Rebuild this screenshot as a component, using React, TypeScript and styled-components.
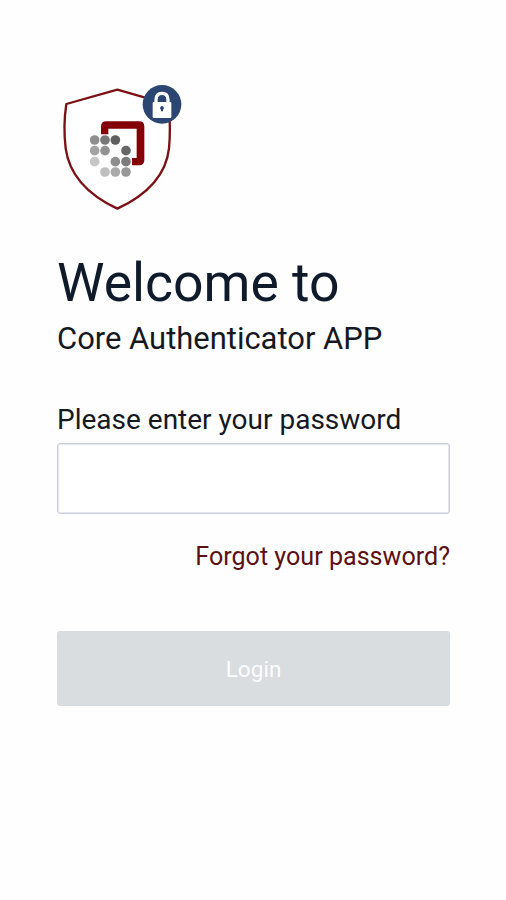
import React, { useState } from "react";
import styled, { createGlobalStyle } from "styled-components";

const GlobalStyle = createGlobalStyle`
  *, *::before, *::after { box-sizing: border-box; }
  body { margin: 0; background: #fefefe; font-family: Roboto, sans-serif; }
`;

const Screen = styled.main`
  display: flex;
  flex-direction: column;
  min-height: 900px;
  padding: 75px 56px 0 57px;
`;

const Logo = styled.svg`
  display: block;
  flex: none;
  width: 140px;
  height: 145px;
  margin-left: -7px;
`;

const Title = styled.h1`
  margin: 33px 0 0;
  font-size: 53.5px;
  line-height: 60px;
  font-weight: 400;
  color: #0f1a2b;
  white-space: nowrap;
`;

const Subtitle = styled.p`
  margin: 8px 0 0;
  font-size: 30.95px;
  line-height: 36px;
  color: #15181f;
  white-space: nowrap;
`;

const Form = styled.form`
  display: flex;
  flex-direction: column;
  margin-top: 47px;
`;

const Label = styled.label`
  font-size: 28px;
  line-height: 32px;
  color: #15181f;
  white-space: nowrap;
`;

const PasswordInput = styled.input`
  width: 100%;
  height: 71px;
  margin-top: 7px;
  padding: 0 16px;
  border: 1px solid #cbccda;
  border-radius: 3px;
  background: #fff;
  box-shadow: inset 0 0 0 1px #e6e6f0;
  font: 400 28px Roboto, sans-serif;
  outline: none;
`;

const ForgotLink = styled.a`
  align-self: flex-end;
  margin-top: 28px;
  font-size: 25.1px;
  line-height: 30px;
  color: #5c1015;
  text-decoration: none;
  white-space: nowrap;
`;

const LoginButton = styled.button`
  width: 100%;
  height: 75px;
  margin-top: 59px;
  padding: 1px 0 0;
  border: 0;
  border-radius: 3px;
  background: #d9dde0;
  color: #fbfcfc;
  font: 400 22.6px Roboto, sans-serif;
`;

const DOTS: [number, number, string][] = [
  [134, 195, "#8e8e8e"],
  [165, 195, "#777777"],
  [196, 195, "#5f5f5f"],
  [134, 227, "#a3a3a3"],
  [165, 227, "#929292"],
  [228, 227, "#676767"],
  [134, 260, "#c6c6c6"],
  [196, 260, "#8e8e8e"],
  [228, 260, "#7c7c7c"],
  [165, 291, "#bfbfbf"],
  [196, 291, "#aaaaaa"],
  [228, 291, "#989898"],
];

function ShieldLogo() {
  return (
    <Logo viewBox="0 0 420 435" role="img" aria-label="Core Authenticator">
      <path
        d="M202 44 L356 88 C360 132 361 178 357 220 C348 301 290 360 202 401 C115 360 58 301 47 220 C42 178 42 132 49 87 Z"
        fill="#fff"
        stroke="#7d1015"
        strokeWidth="7"
        strokeLinejoin="round"
      />
      <path
        d="M153 178 V155 Q153 139 169 139 H267 Q283 139 283 155 V256 Q283 271 267 271 H246 V249 H260 V161 H175 V178 Z"
        fill="#820006"
      />
      {DOTS.map(([x, y, fill]) => (
        <circle key={`${x}-${y}`} cx={x} cy={y} r="14.5" fill={fill} />
      ))}
      <circle cx="336" cy="88" r="58" fill="#2b4672" />
      <path d="M318 84 V75 Q318 55 336 55 Q354 55 354 75 V84" fill="none" stroke="#fff" strokeWidth="10" />
      <rect x="308" y="81" width="56" height="48" rx="3" fill="#fff" />
      <path d="M336 93 a6 6 0 0 1 3 11 V109 H333 V104 a6 6 0 0 1 3-11 Z" fill="#2b4672" />
    </Logo>
  );
}

export default function App() {
  const [password, setPassword] = useState("");
  return (
    <>
      <GlobalStyle />
      <Screen>
        <ShieldLogo />
        <Title>Welcome to</Title>
        <Subtitle>Core Authenticator APP</Subtitle>
        <Form onSubmit={(e) => e.preventDefault()}>
          <Label htmlFor="password">Please enter your password</Label>
          <PasswordInput
            id="password"
            type="password"
            value={password}
            onChange={(e) => setPassword(e.target.value)}
          />
          <ForgotLink href="#">Forgot your password?</ForgotLink>
          <LoginButton type="submit">Login</LoginButton>
        </Form>
      </Screen>
    </>
  );
}
